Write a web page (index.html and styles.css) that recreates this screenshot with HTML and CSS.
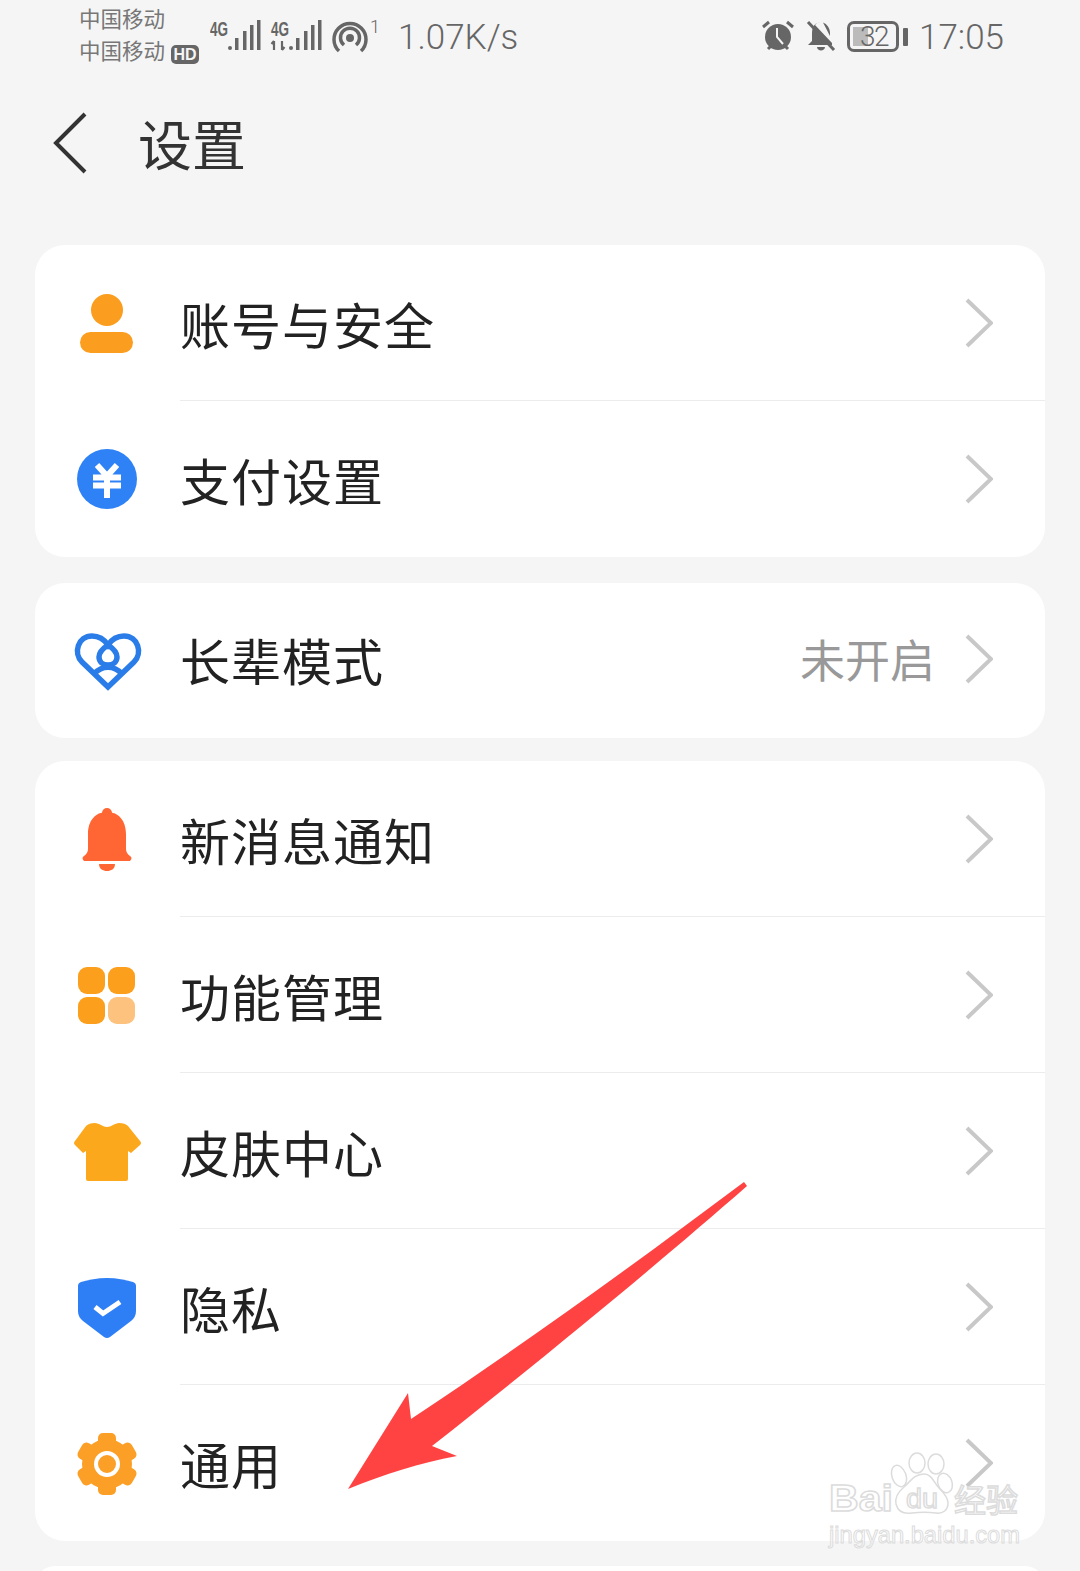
FILE: index.html
```html
<!DOCTYPE html>
<html lang="zh-CN">
<head>
    <meta charset="UTF-8">
    <meta name="viewport" content="width=device-width, initial-scale=1.0">
    <title>设置</title>
    <link rel="stylesheet" href="styles.css">
</head>
<body>
    <div class="status-bar">
        <div class="carriers">
            <div>中国移动</div>
            <div>中国移动<span class="hd">HD</span></div>
        </div>
        <svg class="net-icons" width="170" height="48" viewBox="0 -4 170 48">
            <text class="net-label" x="0" y="16" textLength="18" lengthAdjust="spacingAndGlyphs">4G</text>
            <g fill="#666">
                <rect x="18" y="26" width="4" height="4" rx="2"/>
                <rect x="25" y="18" width="3.500" height="12"/>
                <rect x="33" y="11" width="3.500" height="19"/>
                <rect x="40" y="5" width="3.500" height="25"/>
                <rect x="47" y="0" width="3.500" height="30"/>
            </g>
            <text class="net-label" x="61" y="16" textLength="18" lengthAdjust="spacingAndGlyphs">4G</text>
            <path d="M64 21v9M61.500 24l2.500-3M72 21v9M72 30l2.500-3" stroke="#666" stroke-width="2.200" fill="none"/>
            <g fill="#666">
                <rect x="79" y="26" width="4" height="4" rx="2"/>
                <rect x="86" y="18" width="3.500" height="12"/>
                <rect x="94" y="11" width="3.500" height="19"/>
                <rect x="101" y="5" width="3.500" height="25"/>
                <rect x="108" y="0" width="3.500" height="30"/>
            </g>
            <circle cx="140" cy="18" r="4" fill="#666"/>
            <path d="M134 25a9.500 9.500 0 1 1 12 0M129 31a16 16 0 1 1 22 0" stroke="#666" stroke-width="3.500" fill="none"/>
        </svg>
        <span class="sup">1</span>
        <span class="speed">1.07K/s</span>
        <svg class="alarm" width="34" height="32" viewBox="0 0 34 32">
            <circle cx="17" cy="17" r="13" fill="#666"/>
            <path d="M2 7l6-5M32 7l-6-5M7 29l3-3M27 29l-3-3" stroke="#666" stroke-width="3" fill="none"/>
            <path d="M16 8v9l6 7" stroke="#f5f5f5" stroke-width="2" fill="none"/>
        </svg>
        <svg class="bell-off" width="30" height="32" viewBox="0 0 30 32">
            <path d="M15 2c-6 0-9 5-9 11v8l-4 4h24v-2L9 5c1.500-2 3.500-3 6-3zM24 16v-3c0-5-3-9-7-10.500z" fill="#666"/>
            <path d="M11 27h8c0 2-2 3.500-4 3.500s-4-1.500-4-3.500z" fill="#666"/>
            <path d="M2 2l26 28" stroke="#666" stroke-width="3"/>
        </svg>
        <div class="battery">
            <span class="battery-fill"></span>
            <span class="battery-num">32</span>
        </div>
        <span class="battery-nub"></span>
        <span class="clock">17:05</span>
    </div>

    <div class="title-bar">
        <svg width="36" height="62" viewBox="0 0 36 62"><path d="M33 2L4 31l29 29" stroke="#333" stroke-width="4" fill="none"/></svg>
        <h1>设置</h1>
    </div>

    <div class="card card-first">
        <div class="row">
            <svg class="icon" viewBox="0 0 72 72">
                <circle cx="36" cy="23" r="16" fill="#fb9d1e"/>
                <rect x="9" y="45" width="53" height="21" rx="10.500" fill="#fb9d1e"/>
            </svg>
            <div class="row-body"><span class="row-name">账号与安全</span><svg class="chevron" viewBox="0 0 30 50"><path d="M4 2l24 23L4 48"/></svg></div>
        </div>
        <div class="row">
            <svg class="icon" viewBox="0 0 72 72">
                <circle cx="36" cy="36" r="30" fill="#2e82f6"/>
                <path d="M26 22l10 11 10-11M22 34.500h28M22 42.500h28M36 33v22" stroke="#fff" stroke-width="6" fill="none"/>
            </svg>
            <div class="row-body"><span class="row-name">支付设置</span><svg class="chevron" viewBox="0 0 30 50"><path d="M4 2l24 23L4 48"/></svg></div>
        </div>
    </div>

    <div class="card card-single">
        <div class="row row-single">
            <svg class="icon" viewBox="0 0 72 72">
                <g stroke="#2a7de8" stroke-width="5.500" fill="none">
                    <path d="M37 63L11 38C2 29 7 12 21 12c7 0 12 3 16 9 4-6 9-9 16-9 14 0 19 17 10 26z"/>
                    <path d="M37 21c-6 4-9 8-9 12 0 5 4 8 9 8s9-3 9-8c0-4-3-8-9-12z"/>
                    <path d="M23 50c8-9 20-9 28 0"/>
                </g>
            </svg>
            <div class="row-body"><span class="row-name">长辈模式</span><span class="row-value">未开启</span><svg class="chevron" viewBox="0 0 30 50"><path d="M4 2l24 23L4 48"/></svg></div>
        </div>
    </div>

    <div class="card">
        <div class="row">
            <svg class="icon" viewBox="0 0 72 72">
                <circle cx="36" cy="10" r="5" fill="#ff6633"/>
                <path d="M36 9C24 9 17 18 17 31v15q0 4-4 7-3 2 0 5h46q3-3 0-5-4-3-4-7V31C55 18 48 9 36 9z" fill="#ff6633"/>
                <path d="M28 61h16c0 5-4 7-8 7s-8-2-8-7z" fill="#ff6633"/>
            </svg>
            <div class="row-body"><span class="row-name">新消息通知</span><svg class="chevron" viewBox="0 0 30 50"><path d="M4 2l24 23L4 48"/></svg></div>
        </div>
        <div class="row">
            <svg class="icon" viewBox="0 0 72 72">
                <rect x="7" y="8" width="27" height="27" rx="9" fill="#fb9f1c"/>
                <rect x="37" y="8" width="27" height="27" rx="9" fill="#fb9f1c"/>
                <rect x="7" y="38" width="27" height="27" rx="9" fill="#fb9f1c"/>
                <rect x="37" y="38" width="27" height="27" rx="9" fill="#fdc27e"/>
            </svg>
            <div class="row-body"><span class="row-name">功能管理</span><svg class="chevron" viewBox="0 0 30 50"><path d="M4 2l24 23L4 48"/></svg></div>
        </div>
        <div class="row">
            <svg class="icon" viewBox="0 0 72 72">
                <path d="M24 8c4 0 8 4 12 4s8-4 12-4 7 1 9 3l12 15q2 2 0 4l-9 8-3-2v28q0 2-2 2H17q-2 0-2-2V36l-3 2-8-8q-2-2 0-4l11-15c2-2 5-3 9-3z" fill="#fca81d"/>
            </svg>
            <div class="row-body"><span class="row-name">皮肤中心</span><svg class="chevron" viewBox="0 0 30 50"><path d="M4 2l24 23L4 48"/></svg></div>
        </div>
        <div class="row">
            <svg class="icon" viewBox="0 0 72 72">
                <path d="M36 7c10 0 18 2 26 4q3 1 3 4v25q0 6-5 10L39 66q-3 2-6 0L12 50q-5-4-5-10V15q0-3 3-4c8-2 16-4 26-4z" fill="#2e7ff5"/>
                <path d="M24 36l8 6.500L49 31" stroke="#fff" stroke-width="5" fill="none"/>
            </svg>
            <div class="row-body"><span class="row-name">隐私</span><svg class="chevron" viewBox="0 0 30 50"><path d="M4 2l24 23L4 48"/></svg></div>
        </div>
        <div class="row row-last">
            <svg class="icon" viewBox="0 0 72 72">
                <g fill="#fb9f26">
                    <circle cx="36" cy="37" r="25"/>
                    <rect x="27" y="6" width="18" height="62" rx="5"/>
                    <rect x="27" y="6" width="18" height="62" rx="5" transform="rotate(60 36 37)"/>
                    <rect x="27" y="6" width="18" height="62" rx="5" transform="rotate(120 36 37)"/>
                </g>
                <circle cx="36" cy="37" r="11" fill="none" stroke="#fff" stroke-width="4"/>
            </svg>
            <div class="row-body"><span class="row-name">通用</span><svg class="chevron" viewBox="0 0 30 50"><path d="M4 2l24 23L4 48"/></svg></div>
        </div>
    </div>

    <div class="card card-cut"></div>

    <!-- annotation and watermark sit on top of the screenshot -->
    <svg class="overlay" width="1080" height="1571" viewBox="0 0 1080 1571">
        <path d="M744 1182L747 1186C660 1262 560 1345 432 1446L457 1456C420 1463 385 1474 348 1489L408 1393L411 1419C530 1340 640 1260 744 1182z" fill="#ff4343"/>
        <g class="wm">
            <text class="wm-big" x="829" y="1511" textLength="64" lengthAdjust="spacingAndGlyphs">Bai</text>
            <ellipse cx="899" cy="1476" rx="7" ry="11" transform="rotate(-20 899 1476)"/>
            <ellipse cx="917" cy="1463" rx="8" ry="10"/>
            <ellipse cx="936" cy="1464" rx="8" ry="10"/>
            <ellipse cx="945" cy="1483" rx="7" ry="10" transform="rotate(-20 945 1483)"/>
            <path d="M924 1474c-10 0-14 8-20 13-7 6-9 12-8 17 2 8 9 10 16 9 8-1 16-1 24 0 7 1 12-3 12-10 0-5-4-10-9-15-5-5-7-14-15-14z"/>
            <text class="wm-small" x="906" y="1508" textLength="32" lengthAdjust="spacingAndGlyphs">du</text>
            <text class="wm-cn" x="954" y="1512" textLength="64">经验</text>
            <text class="wm-url" x="829" y="1543" textLength="191" lengthAdjust="spacingAndGlyphs">jingyan.baidu.com</text>
        </g>
    </svg>
</body>
</html>
```

FILE: styles.css
```css
html, body {
    margin: 0;
    height: 1571px;
    overflow: hidden;
}
body {
    position: relative;
    background-color: #f5f5f5;
    font-family: "Noto Sans CJK SC", "Noto Sans", sans-serif;
    color: #222;
}
.status-bar {
    display: flex;
    align-items: center;
    height: 75px;
    padding-left: 79px;
    color: #666;
}
.carriers {
    width: 131px;
    margin-top: -8px;
    font-size: 21.500px;
    line-height: 32px;
    color: #777;
}
.hd {
    display: inline-block;
    margin-left: 6px;
    padding: 0 1px;
    width: 26px;
    height: 19px;
    border-radius: 5px;
    background-color: #666;
    color: #f5f5f5;
    text-align: center;
    font: bold 16px/19px "Liberation Sans", sans-serif;
    vertical-align: -1px;
}
.net-icons {
    flex: none;
    margin-top: 4px;
}
.net-label {
    font: bold 20px "Liberation Sans", sans-serif;
    fill: #666;
}
.sup {
    margin: -22px 0 0 -10px;
    width: 28px;
    font: 300 18px Roboto, sans-serif;
}
.speed {
    font: 300 35px Roboto, sans-serif;
    width: 363px;
}
.alarm {
    margin: -4px 11px 0 0;
}
.bell-off {
    margin: -4px 11px 0 0;
}
.battery {
    position: relative;
    box-sizing: border-box;
    display: flex;
    align-items: center;
    justify-content: flex-end;
    width: 52px;
    height: 31px;
    padding-right: 8px;
    margin-top: -2px;
    border: 3px solid #666;
    border-radius: 7px;
}
.battery-fill {
    position: absolute;
    left: 3px;
    top: 3px;
    bottom: 3px;
    width: 15px;
    background-color: #bbb;
}
.battery-num {
    position: relative;
    font: 300 28px Roboto, sans-serif;
    letter-spacing: -1.500px;
}
.battery-nub {
    width: 5px;
    height: 18px;
    margin: -2px 11px 0 4px;
    border-radius: 1px;
    background-color: #666;
}
.clock {
    font: 300 35px Roboto, sans-serif;
}
.title-bar {
    display: flex;
    align-items: center;
    gap: 50px;
    height: 136px;
    padding-left: 52px;
    margin-bottom: 34px;
}
h1 {
    margin: 0;
    font-size: 54px;
    font-weight: 400;
    line-height: 62px;
    color: #333;
}
.card {
    margin: 0 35px 24px;
    background-color: #fff;
    border-radius: 30px;
}
.card-first {
    margin-bottom: 26px;
}
.card-single {
    margin-bottom: 23px;
}
.card-cut {
    height: 40px;
    margin-top: 25px;
}
.row {
    display: flex;
    align-items: center;
    height: 156px;
}
.row-single {
    height: 155px;
}
.row-single .icon {
    margin-bottom: 2px;
}
.row-single .row-body {
    padding-bottom: 4px;
    border-bottom: none;
}
.icon {
    width: 72px;
    height: 72px;
    flex: none;
    margin: 0 37px 0 36px;
}
.row-body {
    flex: 1;
    display: flex;
    align-items: center;
    align-self: stretch;
    padding-right: 52px;
    border-bottom: 1px solid #ececec;
}
.row:last-child .row-body {
    border-bottom: none;
}
.row-name {
    flex: 1;
    font-size: 50px;
    letter-spacing: 1px;
}
.row-value {
    margin-right: 28px;
    font-size: 45px;
    color: #999;
}
.chevron {
    width: 30px;
    height: 50px;
    flex: none;
    fill: none;
    stroke: #c8c8c8;
    stroke-width: 4px;
}
.overlay {
    position: absolute;
    left: 0;
    top: 0;
}
.wm {
    fill: rgba(255, 255, 255, 0.55);
    stroke: #dcdcdc;
    stroke-width: 1.500px;
}
.wm-big {
    font: bold 37px "Liberation Sans", sans-serif;
}
.wm-small {
    font: 28px "Liberation Sans", sans-serif;
}
.wm-cn {
    font: 32px "Noto Sans CJK SC", sans-serif;
}
.wm-url {
    font: 24px "Liberation Sans", sans-serif;
    stroke-width: 1px;
}
```
